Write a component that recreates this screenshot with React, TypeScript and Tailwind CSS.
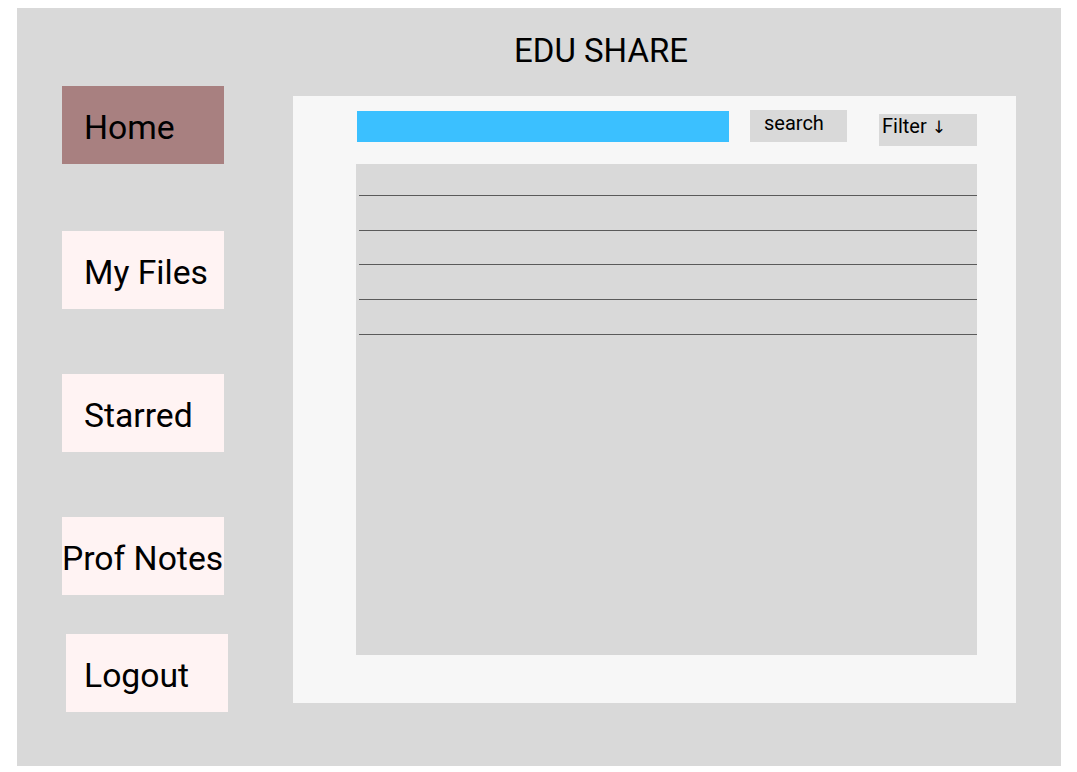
import { useState } from 'react';

const navItems = ['Home', 'My Files', 'Starred', 'Prof Notes', 'Logout'];

// vertical gap above each nav button, and small x nudge (Logout sits a bit right)
const navStyles: Record<string, string> = {
  Home: 'mt-[78px] ml-[45px] pl-[22px]',
  'My Files': 'mt-[67px] ml-[45px] pl-[22px]',
  Starred: 'mt-[65px] ml-[45px] pl-[22px]',
  'Prof Notes': 'mt-[65px] ml-[45px] pl-0',
  Logout: 'mt-[39px] ml-[49px] pl-[18px]',
};

export default function App() {
  const [active, setActive] = useState('Home');
  const [query, setQuery] = useState('');

  return (
    <div className="w-[1077px] h-[772px] bg-white pl-[17px] pt-[8px] font-['Roboto',sans-serif] text-black">
      <div className="w-[1044px] h-[758px] bg-[#d9d9d9] flex">
        {/* sidebar */}
        <div className="w-[276px] flex flex-col">
          {navItems.map((item) => (
            <button
              key={item}
              onClick={() => setActive(item)}
              className={`w-[162px] h-[78px] text-left text-[33.7px] leading-[72px] pt-[6px] whitespace-nowrap ${
                navStyles[item]
              } ${active === item ? 'bg-[#a88080]' : 'bg-[#fff3f3]'}`}
            >
              {item}
            </button>
          ))}
        </div>

        {/* content */}
        <div className="flex flex-col">
          <div className="h-[88px] pt-[25px] pl-[221px] text-[33px] leading-[36px]">EDU SHARE</div>

          <div className="w-[723px] h-[607px] bg-[#f7f7f7] pl-[63px] pt-[14px]">
            <div className="flex items-start h-[54px]">
              <input
                value={query}
                onChange={(e) => setQuery(e.target.value)}
                className="mt-px ml-px w-[372px] h-[31px] bg-[#3bc0ff] outline-none px-2 text-[18px]"
              />
              <button className="ml-[21px] w-[97px] h-[32px] bg-[#d9d9d9] text-left pl-[14px] text-[20px] leading-[26px] pb-[6px]">
                search
              </button>
              <button className="ml-[32px] mt-[4px] w-[98px] h-[32px] bg-[#d9d9d9] text-left pl-[3px] text-[20px] leading-[24px] pb-[8px]">
                Filter <span className="font-['DejaVu_Sans',sans-serif] text-[17px]">↓</span>
              </button>
            </div>

            <div className="w-[621px] h-[491px] bg-[#d9d9d9] pl-[3px]">
              <div className="h-[32px] border-b border-[#5a5a5a]" />
              <div className="h-[35px] border-b border-[#5a5a5a]" />
              <div className="h-[34px] border-b border-[#5a5a5a]" />
              <div className="h-[35px] border-b border-[#5a5a5a]" />
              <div className="h-[35px] border-b border-[#5a5a5a]" />
            </div>
          </div>
        </div>
      </div>
    </div>
  );
}
